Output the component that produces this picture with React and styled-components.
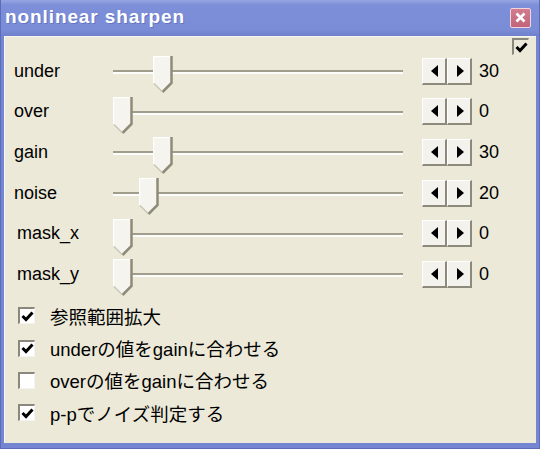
import styled, { createGlobalStyle } from "styled-components";

// ---- constants ----
const faceCol = "#ece9d8";
const frameCol = "#7485d2";
const shadowCol = "#8d8a7b";
const uiFont = `"Liberation Sans", "Noto Sans CJK JP", sans-serif`;

const sliders = [
	{ label: "under", value: 30 },
	{ label: "over", value: 0 },
	{ label: "gain", value: 30 },
	{ label: "noise", value: 20 },
	{ label: "mask_x", value: 0, indent: 3 },
	{ label: "mask_y", value: 0, indent: 3 },
];

const options = [
	{ label: "参照範囲拡大", checked: true },
	{ label: "underの値をgainに合わせる", checked: true },
	{ label: "overの値をgainに合わせる", checked: false },
	{ label: "p-pでノイズ判定する", checked: true },
];

// ---- styles ----
const GlobalStyle = createGlobalStyle`
	html, body {
		margin: 0;
		padding: 0;
		background: ${faceCol};
	}
	body {
		font-family: ${uiFont};
	}
`;

const Window = styled.div`
	width: 540px;
	height: 449px;
	box-sizing: border-box;
	display: flex;
	flex-direction: column;
	background: ${frameCol};
	border: 1px solid #5d6bba;
	border-top: none;
	padding: 0 3px 5px 3px;
	overflow: hidden;
`;

const TitleBar = styled.div`
	height: 36px;
	flex: none;
	display: flex;
	align-items: center;
	justify-content: space-between;
	margin: 0 -3px;
	padding: 0 8px 2px 4px;
	box-sizing: border-box;
	background: linear-gradient(#97a5e3 0px, #7d8fd8 5px, #7b8cd6 30px, #6f80cc 36px);
`;

const Title = styled.span`
	font: bold 19px ${uiFont};
	letter-spacing: 0.9px;
	color: #fff;
	text-shadow: 1px 1px 0 #6475c2;
`;

const CloseButton = styled.div`
	width: 21px;
	height: 20px;
	box-sizing: border-box;
	border: 1px solid #f1d4dc;
	border-radius: 2px;
	background: linear-gradient(#d27d90, #c2647a);
	display: flex;
	align-items: center;
	justify-content: center;
	margin-top: 1px;
`;

const Body = styled.div`
	flex: 1;
	background: ${faceCol};
	border-top: 1px solid #f7f6f1;
	border-left: 1px solid #f7f6f1;
	display: flex;
	flex-direction: column;
`;

const TopRow = styled.div`
	height: 13px;
	display: flex;
	justify-content: flex-end;
	padding: 1px 7px 0 0;
`;

const SliderList = styled.div`
	display: flex;
	flex-direction: column;
`;

const SliderRow = styled.div`
	height: 40.6px;
	display: flex;
	align-items: center;
	padding-left: ${(p) => 9 + (p.$indent || 0)}px;
`;

const Label = styled.span`
	width: ${(p) => 99 - (p.$indent || 0)}px;
	font-size: 18px;
	color: #000;
	flex: none;
`;

const SliderArea = styled.div`
	position: relative;
	width: 309px;
	height: 100%;
	flex: none;
`;

const Track = styled.div`
	position: absolute;
	left: 0;
	top: calc(50% - 1px);
	width: 290px;
	height: 2px;
	background: #a09d8c;
	border-bottom: 2px solid #fdfdfb;
`;

const Thumb = styled.svg`
	position: absolute;
	top: calc(50% - 15px);
	width: 20px;
	height: 37px;
`;

const SpinPair = styled.div`
	display: flex;
	flex: none;
`;

const SpinButton = styled.div`
	width: 25px;
	height: 27px;
	box-sizing: border-box;
	background: #f3f2ec;
	border-top: 1px solid #fff;
	border-left: 1px solid #fff;
	border-right: 2px solid ${shadowCol};
	border-bottom: 2px solid ${shadowCol};
	display: flex;
	align-items: center;
	justify-content: center;
	padding-left: ${(p) => (p.$dir === "left" ? 0 : 2)}px;
`;

const Value = styled.span`
	margin-left: 7px;
	font-size: 18px;
	color: #000;
`;

const OptionList = styled.div`
	display: flex;
	flex-direction: column;
	margin-top: 5px;
`;

const OptionRow = styled.label`
	height: 32.3px;
	display: flex;
	align-items: center;
	padding-left: 13px;
	font-size: 18.5px;
	color: #000;
`;

const Box = styled.div`
	width: 17px;
	height: 17px;
	box-sizing: border-box;
	flex: none;
	background: ${(p) => (p.$flat ? "transparent" : "#fff")};
	border-top: 2px solid #8a887c;
	border-left: 2px solid #8a887c;
	border-right: 1px solid ${(p) => (p.$flat ? "transparent" : "#f4f3ee")};
	border-bottom: 1px solid ${(p) => (p.$flat ? "transparent" : "#f4f3ee")};
	display: flex;
	align-items: center;
	justify-content: center;
	margin-right: ${(p) => (p.$flat ? 0 : 15)}px;
`;

// ---- subcomponents ----
const CheckBox = ({ checked, flat }) => (
	<Box $flat={flat}>
		{checked && (
			<svg width="13" height="11" viewBox="0 0 13 11">
				<path d="M1.5 5 L5 8.5 L11.5 1.5" fill="none" stroke="#000" strokeWidth="3" />
			</svg>
		)}
	</Box>
);

const SliderThumb = ({ left }) => (
	<Thumb viewBox="0 0 20 37" style={{ left }}>
		<polygon points="0.5,0.5 18,0.5 18,27 9.5,35.5 0.5,27" fill="#f5f4ee" />
		<polyline points="0.5,27 0.5,0.5 18,0.5" fill="none" stroke="#fff" strokeWidth="1.5" />
		<polyline points="18.5,0 18.5,27 9.5,36" fill="none" stroke="#8e8b78" strokeWidth="2.5" />
		<polyline points="1,27.5 9,35.5" fill="none" stroke="#c9c6b6" strokeWidth="1.5" />
	</Thumb>
);

const Spin = () => (
	<SpinPair>
		<SpinButton $dir="left">
			<svg width="7" height="12" viewBox="0 0 7 12">
				<polygon points="7,0 7,12 0,6" fill="#000" />
			</svg>
		</SpinButton>
		<SpinButton $dir="right">
			<svg width="7" height="12" viewBox="0 0 7 12">
				<polygon points="0,0 7,6 0,12" fill="#000" />
			</svg>
		</SpinButton>
	</SpinPair>
);

// ---- app ----
export default function App() {
	return (
		<>
			<GlobalStyle />
			<Window>
				<TitleBar>
					<Title>nonlinear sharpen</Title>
					<CloseButton>
						<svg width="11" height="11" viewBox="0 0 11 11">
							<path d="M1.5 1.5 L9.5 9.5 M9.5 1.5 L1.5 9.5" stroke="#fff" strokeWidth="2.6" />
						</svg>
					</CloseButton>
				</TitleBar>
				<Body>
					<TopRow>
						<CheckBox checked flat />
					</TopRow>
					<SliderList>
						{sliders.map((s) => (
							<SliderRow key={s.label} $indent={s.indent}>
								<Label $indent={s.indent}>{s.label}</Label>
								<SliderArea>
									<Track />
									<SliderThumb left={s.value * 1.32} />
								</SliderArea>
								<Spin />
								<Value>{s.value}</Value>
							</SliderRow>
						))}
					</SliderList>
					<OptionList>
						{options.map((o) => (
							<OptionRow key={o.label}>
								<CheckBox checked={o.checked} />
								{o.label}
							</OptionRow>
						))}
					</OptionList>
				</Body>
			</Window>
		</>
	);
}
